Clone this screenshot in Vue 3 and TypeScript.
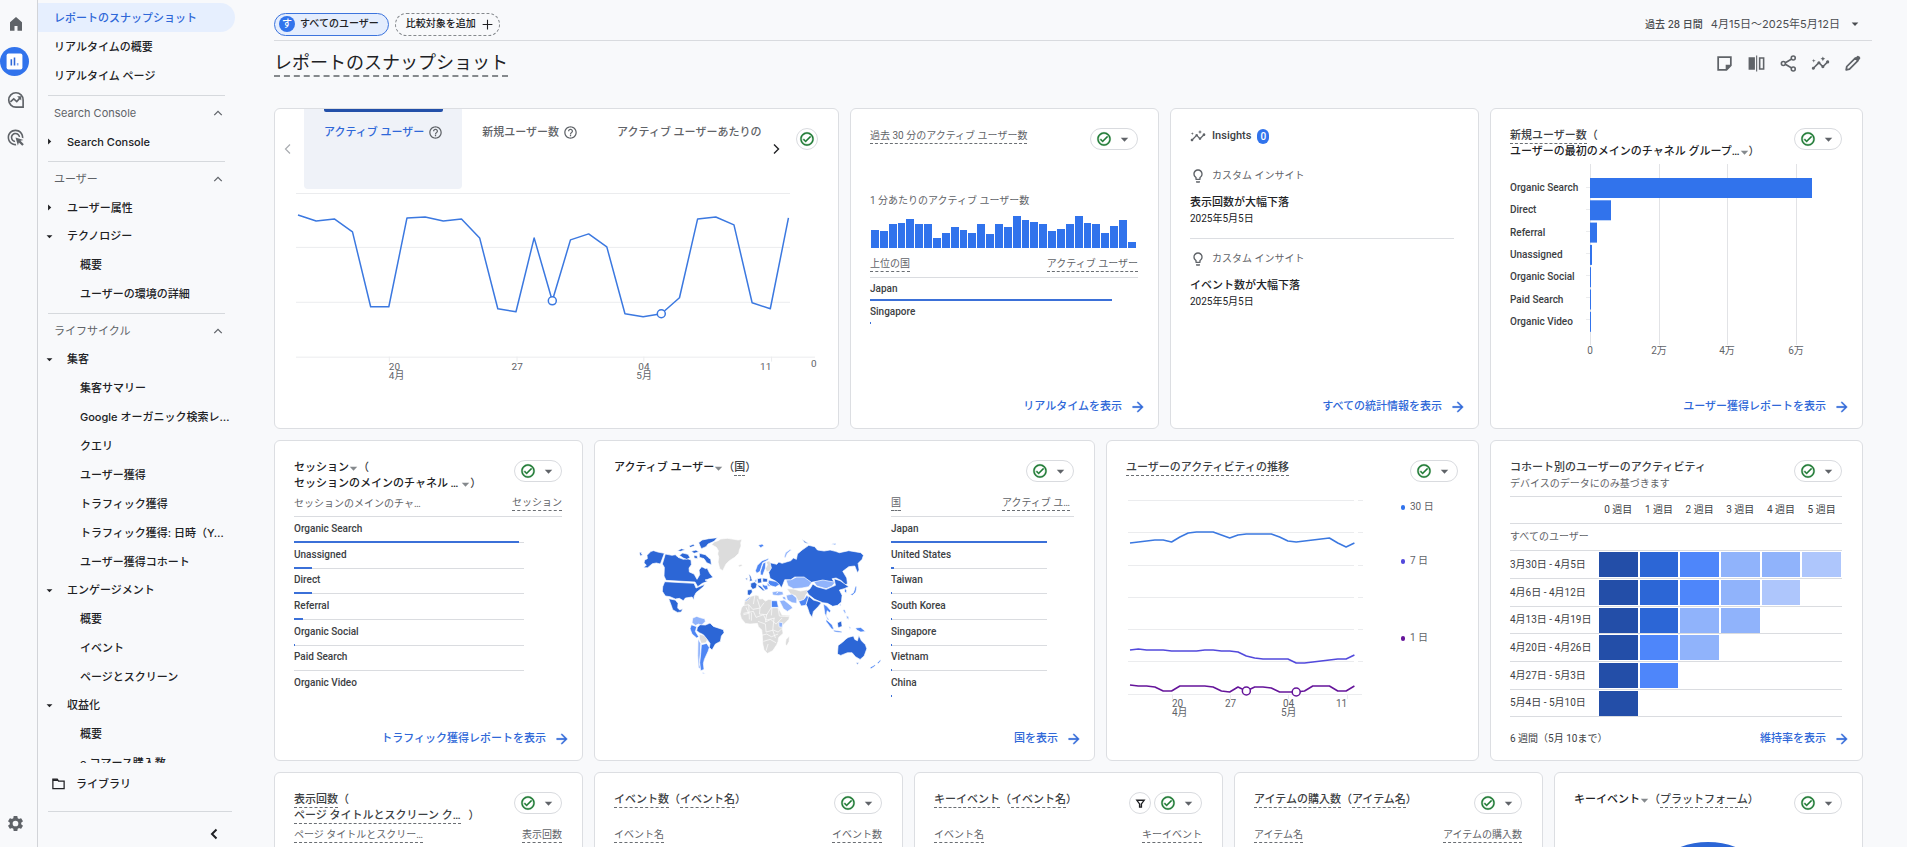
<script setup lang="ts">
import { h } from 'vue'

interface NavRow { label: string; level: 0 | 1 | 2; state?: 'open' | 'closed'; active?: boolean }
interface NavSection { title?: string; rows: NavRow[] }
interface BarRow { label: string; share: number }

const ICONS: Record<string, string> = {
  home: '<path d="M4 21V9.500l8-7 8 7V21h-6v-6.500h-4V21z"/>',
  bars: '<rect x="2" y="2" width="20" height="20" rx="2.500" fill="#fff"/><path d="M7 9h2v8H7zM11 7h2v10h-2z" fill="#2f68d8"/><path d="M15 14h2v3h-2z" fill="#7fa8f4"/>',
  explore: '<path fill="none" stroke="currentColor" stroke-width="2.200" d="M12 21.500A9.600 9.600 0 1 1 21.500 12v9.500z"/><path fill="none" stroke="currentColor" stroke-width="2.200" d="M4.500 14.500l4.500-4 4 3.500 5-5.500"/><path d="M13.500 7H19v5.500z"/>',
  ads: '<path d="M11.71 17.990C8.530 17.840 6 15.220 6 12c0-3.310 2.690-6 6-6 3.220 0 5.840 2.530 5.990 5.710l-2.100-.63C15.480 9.310 13.890 8 12 8c-2.210 0-4 1.790-4 4 0 1.890 1.310 3.480 3.080 3.890l.63 2.100zM22 12c0 .3-.01.6-.04.9l-1.970-.59c.01-.1.01-.21.01-.31 0-4.420-3.580-8-8-8s-8 3.580-8 8 3.580 8 8 8c.1 0 .21 0 .31-.01l.59 1.970c-.3.03-.6.04-.9.04C6.480 22 2 17.520 2 12S6.480 2 12 2s10 4.480 10 10zm-3.770 4.260L22 15l-10-3 3 10 1.260-3.770 4.270 4.270 1.980-1.980-4.280-4.260z"/>',
  gear: '<path d="M19.140 12.940c.04-.3.06-.61.06-.94s-.02-.64-.07-.94l2.030-1.580a.49.49 0 0 0 .12-.61l-1.920-3.320a.49.49 0 0 0-.59-.22l-2.390.96c-.5-.38-1.030-.7-1.620-.94l-.36-2.540a.48.48 0 0 0-.48-.41h-3.840c-.24 0-.43.17-.47.41l-.36 2.540c-.59.24-1.130.57-1.620.94l-2.390-.96a.48.48 0 0 0-.59.22L2.740 8.870c-.12.21-.08.47.12.61l2.030 1.580c-.05.3-.09.63-.09.94s.02.64.07.94l-2.030 1.580a.49.49 0 0 0-.12.61l1.920 3.320c.12.22.37.29.59.22l2.390-.96c.5.38 1.030.7 1.620.94l.36 2.540c.05.24.24.41.48.41h3.840c.24 0 .44-.17.47-.41l.36-2.540c.59-.24 1.130-.56 1.620-.94l2.390.96c.22.08.47 0 .59-.22l1.920-3.320a.48.48 0 0 0-.12-.61l-2.010-1.580zM12 15.600A3.600 3.600 0 1 1 12 8.400a3.600 3.600 0 0 1 0 7.200z"/>',
  check: '<path d="M12 2C6.480 2 2 6.480 2 12s4.480 10 10 10 10-4.480 10-10S17.520 2 12 2zm0 18c-4.410 0-8-3.590-8-8s3.590-8 8-8 8 3.590 8 8-3.590 8-8 8zm4.590-12.420L10 14.170l-2.590-2.580L6 13l4 4 8-8z" stroke="currentColor" stroke-width=".5"/>',
  caret: '<path d="M2 7.500h20L12 18z"/>',
  caretRight: '<path d="M7 2l11 10L7 22z"/>',
  help: '<path d="M11 18h2v-2h-2v2zm1-16C6.480 2 2 6.480 2 12s4.480 10 10 10 10-4.480 10-10S17.520 2 12 2zm0 18c-4.410 0-8-3.590-8-8s3.590-8 8-8 8 3.590 8 8-3.590 8-8 8zm0-14c-2.210 0-4 1.790-4 4h2c0-1.100.9-2 2-2s2 .9 2 2c0 2-3 1.750-3 5h2c0-2.250 3-2.500 3-5 0-2.210-1.790-4-4-4z"/>',
  insights: '<path d="M21 8c-1.450 0-2.260 1.440-1.930 2.510l-3.550 3.560c-.3-.09-.74-.09-1.040 0l-2.550-2.550C12.270 10.450 11.460 9 10 9c-1.450 0-2.270 1.440-1.930 2.520l-4.560 4.550C2.440 15.740 1 16.550 1 18c0 1.100.9 2 2 2 1.450 0 2.260-1.440 1.930-2.510l4.550-4.560c.3.09.74.09 1.040 0l2.550 2.550C12.730 16.550 13.540 18 15 18c1.450 0 2.270-1.440 1.930-2.520l3.560-3.550C21.560 12.260 23 11.450 23 10c0-1.100-.9-2-2-2zM15 9l.94-2.070L18 6l-2.060-.93L15 3l-.92 2.070L12 6l2.080.93zM3.500 11L4 9l2-.5L4 8l-.5-2L3 8l-2 .5L3 9z"/>',
  note: '<path fill="none" stroke="currentColor" stroke-width="2.200" d="M4 4h16v10.500L14.500 20H4z"/><path d="M20.500 13.500h-7v7z"/>',
  compare: '<path d="M2 4h8v16H2zM11.500 2h1.400v20h-1.400z"/><path fill="none" stroke="currentColor" stroke-width="2" d="M16 5h5v14h-5z"/>',
  share: '<g fill="none" stroke="currentColor" stroke-width="2"><circle cx="18" cy="5" r="2.500"/><circle cx="5.500" cy="12" r="2.500"/><circle cx="18" cy="19" r="2.500"/><path d="M8 11l8-4.700M8 13l8 4.700"/></g>',
  edit: '<path fill="none" stroke="currentColor" stroke-width="2.200" stroke-linejoin="round" d="M4 20l.8-4.200L15.500 5.100l3.400 3.400L8.200 19.200z"/><path d="M14.800 5.700l3.200-3.200q1-.7 2 .2l1.500 1.500q.8 1 0 2l-3 3z"/>',
  bulb: '<path d="M9 21c0 .55.45 1 1 1h4c.55 0 1-.45 1-1v-1H9v1zm3-19C8.140 2 5 5.140 5 9c0 2.380 1.190 4.470 3 5.740V17c0 .55.45 1 1 1h6c.55 0 1-.45 1-1v-2.260c1.810-1.270 3-3.360 3-5.740 0-3.860-3.140-7-7-7zm2.850 11.100l-.85.6V16h-4v-2.300l-.85-.6A5 5 0 0 1 7 9c0-2.760 2.240-5 5-5s5 2.240 5 5c0 1.630-.8 3.160-2.150 4.100z"/>',
  arrow: '<path d="M12 4l-1.410 1.410L16.170 11H4v2h12.170l-5.580 5.590L12 20l8-8z" stroke="currentColor" stroke-width=".6"/>',
  up: '<path fill="none" stroke="currentColor" stroke-width="3" d="M3 17l9-9 9 9"/>',
  left: '<path fill="none" stroke="currentColor" stroke-width="2.400" d="M16 3l-9 9 9 9"/>',
  leftBold: '<path fill="none" stroke="currentColor" stroke-width="4" d="M17 3l-9 9 9 9"/>',
  right: '<path fill="none" stroke="currentColor" stroke-width="2.800" d="M8 3l9 9-9 9"/>',
  plus: '<path d="M11 3h2v8h8v2h-8v8h-2v-8H3v-2h8z"/>',
  folder: '<path fill="none" stroke="currentColor" stroke-width="2" d="M3 5h7l2 3h9v12H3z"/><path d="M3 5h7l2 3H3z"/>',
  funnel: '<path fill="none" stroke="currentColor" stroke-width="3" d="M4 5h16l-6 8v7h-4v-7z"/>',
}

const Icon = (p: { name: string; size: number }) =>
  h('svg', { viewBox: '0 0 24 24', width: p.size, height: p.size, fill: 'currentColor', 'aria-hidden': 'true', innerHTML: ICONS[p.name] })
Icon.props = ['name', 'size']

const nav: NavSection[] = [
  { rows: [
    { label: 'レポートのスナップショット', level: 0, active: true },
    { label: 'リアルタイムの概要', level: 0 },
    { label: 'リアルタイム ページ', level: 0 },
  ] },
  { title: 'Search Console', rows: [{ label: 'Search Console', level: 1, state: 'closed' }] },
  { title: 'ユーザー', rows: [
    { label: 'ユーザー属性', level: 1, state: 'closed' },
    { label: 'テクノロジー', level: 1, state: 'open' },
    { label: '概要', level: 2 },
    { label: 'ユーザーの環境の詳細', level: 2 },
  ] },
  { title: 'ライフサイクル', rows: [
    { label: '集客', level: 1, state: 'open' },
    { label: '集客サマリー', level: 2 },
    { label: 'Google オーガニック検索レ…', level: 2 },
    { label: 'クエリ', level: 2 },
    { label: 'ユーザー獲得', level: 2 },
    { label: 'トラフィック獲得', level: 2 },
    { label: 'トラフィック獲得: 日時（Y…', level: 2 },
    { label: 'ユーザー獲得コホート', level: 2 },
    { label: 'エンゲージメント', level: 1, state: 'open' },
    { label: '概要', level: 2 },
    { label: 'イベント', level: 2 },
    { label: 'ページとスクリーン', level: 2 },
    { label: '収益化', level: 1, state: 'open' },
    { label: '概要', level: 2 },
    { label: 'e コマース購入数', level: 2 },
  ] },
]

const tools = [
  { icon: 'note', label: 'メモ' },
  { icon: 'compare', label: '比較' },
  { icon: 'share', label: '共有' },
  { icon: 'insights', label: 'インサイト' },
  { icon: 'edit', label: '編集' },
]

const line = (values: number[], x0: number, step: number) =>
  values.map((v, i) => `${(x0 + i * step).toFixed(1)},${v}`).join(' ')

const activeUsers = [35, 41, 39, 52, 127, 127, 38, 37, 41, 39, 58, 129, 132, 58, 121, 60, 54, 67, 134, 137, 134, 118, 39, 37, 45, 123, 129, 38]
const activeX = (i: number) => 4 + i * 18.2

const perMinute = [18, 17, 24, 25, 29, 24, 24, 10, 15, 21, 18, 15, 24, 14, 24, 21, 32, 28, 26, 24, 17, 19, 24, 32, 25, 24, 15, 22, 28, 6]

const insights = ['表示回数が大幅下落', 'イベント数が大幅下落']

const channels = [
  { label: 'Organic Search', width: 222 },
  { label: 'Direct', width: 21 },
  { label: 'Referral', width: 7 },
  { label: 'Unassigned', width: 2 },
  { label: 'Organic Social', width: 1 },
  { label: 'Paid Search', width: 1 },
  { label: 'Organic Video', width: 1 },
]

const sessions: BarRow[] = [
  { label: 'Organic Search', share: 98 }, { label: 'Unassigned', share: 8 }, { label: 'Direct', share: 8 },
  { label: 'Referral', share: 4 }, { label: 'Organic Social', share: 0.5 }, { label: 'Paid Search', share: 0 }, { label: 'Organic Video', share: 0 },
]
const countries: BarRow[] = [
  { label: 'Japan', share: 100 }, { label: 'United States', share: 2 }, { label: 'Taiwan', share: 0.7 },
  { label: 'South Korea', share: 0.7 }, { label: 'Singapore', share: 0.7 }, { label: 'Vietnam', share: 0.7 }, { label: 'China', share: 0.7 },
]

const days30 = [53, 52, 51, 50, 50, 52, 47, 43, 42, 42, 42, 45, 48, 45, 44, 44, 44, 44, 47, 51, 52, 51, 50, 49, 48, 53, 57, 53]
const days7 = [161, 160, 161, 161, 161, 162, 162, 162, 162, 161, 161, 162, 162, 163, 167, 169, 170, 170, 170, 170, 174, 174, 173, 172, 171, 170, 170, 166]
const days1 = [195, 196, 196, 197, 201, 201, 196, 196, 196, 196, 197, 201, 202, 197, 201, 197, 197, 198, 202, 202, 202, 201, 196, 196, 196, 201, 201, 196]

const cohorts = [
  { label: '3月30日 - 4月5日', cells: [5, 4, 3, 2, 2, 1] },
  { label: '4月6日 - 4月12日', cells: [5, 4, 3, 2, 1] },
  { label: '4月13日 - 4月19日', cells: [5, 4, 2, 2] },
  { label: '4月20日 - 4月26日', cells: [5, 3, 2] },
  { label: '4月27日 - 5月3日', cells: [5, 3] },
  { label: '5月4日 - 5月10日', cells: [5] },
]
</script>

<template>
  <div class="app" lang="ja">
    <nav class="rail" aria-label="メイン">
      <a href="#" aria-label="ホーム"><Icon name="home" :size="18" /></a>
      <a href="#" class="current" aria-label="レポート"><Icon name="bars" :size="19" /></a>
      <a href="#" aria-label="探索"><Icon name="explore" :size="18" /></a>
      <a href="#" aria-label="広告"><Icon name="ads" :size="19" /></a>
      <a href="#" class="admin" aria-label="管理"><Icon name="gear" :size="19" /></a>
    </nav>

    <aside class="side">
      <div class="side-scroll">
        <section v-for="(s, i) in nav" :key="i" class="group">
          <button v-if="s.title" class="group-head" type="button">{{ s.title }}<Icon name="up" :size="10" /></button>
          <a v-for="(r, j) in s.rows" :key="j" href="#" class="row" :class="['lv' + r.level, r.state, { active: r.active }]">
            <span v-if="r.state" class="twist"><Icon :name="r.state === 'open' ? 'caret' : 'caretRight'" :size="7" /></span>{{ r.label }}
          </a>
        </section>
      </div>
      <a href="#" class="library"><Icon name="folder" :size="15" />ライブラリ</a>
      <div class="fold"><button type="button" aria-label="折りたたむ"><Icon name="leftBold" :size="12" /></button></div>
    </aside>

    <main class="main">
      <header class="topbar">
        <button class="chip on" type="button"><span class="avatar">す</span>すべてのユーザー</button>
        <button class="chip add" type="button">比較対象を追加<Icon name="plus" :size="13" /></button>
        <button class="date" type="button"><small>過去 28 日間</small><span>4月15日～2025年5月12日</span><Icon name="caret" :size="8" /></button>
      </header>
      <div class="heading">
        <h1>レポートのスナップショット</h1>
        <div class="tools">
          <button v-for="t in tools" :key="t.icon" type="button" :aria-label="t.label"><Icon :name="t.icon" :size="19" /></button>
        </div>
      </div>

      <div class="grid">
        <section class="card w9 trend">
          <div class="tabs">
            <button class="nudge off" type="button" aria-label="前へ"><Icon name="left" :size="12" /></button>
            <div class="tab-list" role="tablist">
              <button class="tab on" role="tab" type="button" aria-selected="true">アクティブ ユーザー<Icon name="help" :size="15" /></button>
              <button class="tab" role="tab" type="button">新規ユーザー数<Icon name="help" :size="15" /></button>
              <button class="tab" role="tab" type="button">アクティブ ユーザーあたりの</button>
            </div>
            <button class="nudge" type="button" aria-label="次へ"><Icon name="right" :size="12" /></button>
            <button class="round" type="button" aria-label="データ品質"><Icon name="check" :size="16" /></button>
          </div>
          <svg class="chart trend-chart" viewBox="0 0 525 220" role="img" aria-label="アクティブ ユーザーの推移">
            <path class="gl" d="M2 4.500H497M2 58.500H497M2 113.500H497M2 168.500H522M95.500 168V173M223.500 168V173M350.500 168V173M478.500 168V173" />
            <polyline class="series" :points="line(activeUsers, 4, 18.2)" transform="translate(0 -9)" />
            <circle v-for="i in [14, 20]" :key="i" class="dot" :cx="activeX(i)" :cy="activeUsers[i] - 9" r="4" />
            <g class="tick"><text x="95" y="181">20</text><text x="95" y="190">4月</text><text x="218" y="181">27</text><text x="345" y="181">04</text><text x="343" y="190">5月</text><text x="467" y="181">11</text><text x="518" y="178">0</text></g>
          </svg>
        </section>

        <section class="card w5">
          <div class="head">
            <h2 class="small"><span class="dash">過去 30 分のアクティブ ユーザー数</span></h2>
            <button class="pill" type="button" aria-label="データ品質"><Icon name="check" :size="16" /><Icon name="caret" :size="9" /></button>
          </div>
          <p class="per-min">1 分あたりのアクティブ ユーザー数</p>
          <div class="spark"><i v-for="(v, i) in perMinute" :key="i" :style="{ height: v + 'px' }"></i></div>
          <table class="ranks live">
            <colgroup><col><col class="mid-col"><col class="end-col"></colgroup>
            <thead><tr><th><span class="dash">上位の国</span></th><th class="r" colspan="2"><span class="dash">アクティブ ユーザー</span></th></tr></thead>
            <tbody>
              <tr><td colspan="2">Japan<i :style="{ width: '99%' }"></i></td><td class="v"></td></tr>
              <tr><td colspan="2">Singapore<i :style="{ width: '1px' }"></i></td><td class="v"></td></tr>
            </tbody>
          </table>
          <a href="#" class="more">リアルタイムを表示<Icon name="arrow" :size="16" /></a>
        </section>

        <section class="card w5">
          <h2 class="ins-title"><Icon name="insights" :size="16" />Insights<b>0</b></h2>
          <article v-for="t in insights" :key="t" class="insight">
            <p class="kind"><Icon name="bulb" :size="16" />カスタム インサイト</p>
            <h3>{{ t }}</h3>
            <time datetime="2025-05-05">2025年5月5日</time>
          </article>
          <a href="#" class="more">すべての統計情報を表示<Icon name="arrow" :size="16" /></a>
        </section>

        <section class="card w6">
          <div class="head">
            <h2><span class="dash">新規ユーザー数</span>（<br><button class="pick" type="button">ユーザーの最初のメインのチャネル グループ…<Icon name="caret" :size="9" /></button>）</h2>
            <button class="pill" type="button" aria-label="データ品質"><Icon name="check" :size="16" /><Icon name="caret" :size="9" /></button>
          </div>
          <svg class="chart channels" viewBox="0 0 332 200" role="img" aria-label="チャネル別の新規ユーザー数">
            <path class="gl strong" d="M80.500 4V185M149.500 4V185M217.500 4V185M286.500 4V185" />
            <g v-for="(c, i) in channels" :key="c.label">
              <path class="gl" :d="`M76 ${27.5 + i * 22}H80`" />
              <rect x="80" :y="18 + i * 22.3" :width="c.width" height="20" class="bar" />
              <text x="0" :y="31 + i * 22.3" class="name">{{ c.label }}</text>
            </g>
            <g class="tick mid"><text x="80" y="194">0</text><text x="149" y="194">2万</text><text x="217" y="194">4万</text><text x="286" y="194">6万</text></g>
          </svg>
          <a href="#" class="more">ユーザー獲得レポートを表示<Icon name="arrow" :size="16" /></a>
        </section>

        <section class="card w5">
          <div class="head">
            <h2><button class="pick" type="button">セッション<Icon name="caret" :size="9" /></button>（<br><button class="pick" type="button">セッションのメインのチャネル … <Icon name="caret" :size="9" /></button>）</h2>
            <button class="pill" type="button" aria-label="データ品質"><Icon name="check" :size="16" /><Icon name="caret" :size="9" /></button>
          </div>
          <table class="ranks">
            <colgroup><col><col class="mid-col"><col class="end-col"></colgroup>
            <thead><tr><th>セッションのメインのチャ…</th><th class="r" colspan="2"><span class="dash">セッション</span></th></tr></thead>
            <tbody>
              <tr v-for="r in sessions" :key="r.label"><td colspan="2">{{ r.label }}<i :style="{ width: r.share + '%' }"></i></td><td class="v"></td></tr>
            </tbody>
          </table>
          <a href="#" class="more">トラフィック獲得レポートを表示<Icon name="arrow" :size="16" /></a>
        </section>

        <section class="card w8">
          <div class="head">
            <h2><button class="pick" type="button">アクティブ ユーザー<Icon name="caret" :size="9" /></button>（<span class="dash">国</span>）</h2>
            <button class="pill" type="button" aria-label="データ品質"><Icon name="check" :size="16" /><Icon name="caret" :size="9" /></button>
          </div>
          <div class="geo">
            <svg class="map" viewBox="0 0 800 510" role="img" aria-label="国別アクティブ ユーザー">
              <g class="m0">
                <path d="M282 72l12-4 8-5 20-2 20 3 12 2 12-2-4 10 1 10-5 12-2 10-12 12-16 10-10 10-10 20-9-6-5-20 2-14-3-10 2-10-6-10-14-8zM354 142l10-3 3 4-9 4z" />
                <path d="M374 246l14-10 20-5 8 2 2 10 10-1 8 7 10-5 8 1v24h20l8 14 4 8 24 1-4 12-18 18-1 10 2 14-13 12-2 12-4 10-12 18-16 8-10-10-4-18-1-20-2-22-10-10-3-10-22 2-14-2-12-14-4-14 4-18 8-10z" />
                <path d="M498 364l10-10-1 16-7 14-4-6zM438 132l10-4 6 12v16l-14 6-4-10 6-12zM500 212l20 1 22 6 18-4 12 4-14 10-6 16-18 4-8-16-14-4zM238 348l14 4 10 12-4 10-14 2-6-14z" />
              </g>
              <path class="seam" d="M358 264l28-4 12 14 22-4 12-16M386 260l2 44M412 244l8 26-2 18 22 2 14-22M370 286l30-6 8 18 22-8 8 16 26-6M440 288l-4 24 16-8 16 14 18-18M414 310l22 8 2 24 22-6 14 6 14-12M424 352l16-4 14 8 20-8M430 370l20-6 18 10M444 378l-6 20M474 270l4 24 32 2M456 262l-2 30M462 300l-4 36 8 24M404 234l-4 24M378 268l8 18-16 4M394 284v24" />
              <g class="m1">
                <path d="M218 300l12-5 14 5 10 2 2 8-12 12-8-4-10 4-10-8zM234 362l8 14-1 30-3 32 7 18-10-8-2-36zM248 462l8 5-8 0z" />
                <path d="M456 222l16-3 16 2 2 9-16 3-16-2zM478 248l14-2 22 18 4 6-16 10-12-8zM498 232l18-4 14 12v16l-14-2-14-8zM476 312l12 2-2 14-9-2zM374 248l14-12 2 4-12 10zM486 236l9 0 4 10-9-2z" />
                <path d="M498 186l18-2 14-8h26l20 16-10 14-20 4-26 2-16-8zM580 190l32-6 34 8-10 12-18 8-28-8zM492 118l4-14 14-10 4 2-12 10-6 14zM440 194l8 4 4 8-10-2z" />
                <path d="M404 186l6-2 0 8-5 1zM658 262l4-6 1 8zM668 276l6-2 4 10-4 2zM678 292l8 4 0 8-6-3zM686 324l6 4-3 6zM470 226l4-6z" />
              </g>
              <g class="m2">
                <path d="M214 320l16 6-4 14 10 16-6 4-14-12-6-16zM244 380l16-4 8 12-4 12-11 24-3 12 2 18-10 4-3-24 3-28z" />
                <path d="M454 248h17l4 20h-21zM406 158l6-16 14-14 20-7-2 5-16 8-8 26-10 6zM421 160l8-24 8-4-1 18-8 22-7-2zM446 186l14 3 14 2 6 8-14 8-14-4-8-8zM536 250l16-6 8-12 6 6-9 24-14 2zM426 198l8 4 8 0 2 12-8 2-8-10z" />
                <path d="M610 258l10 6 12 14-3 6-8-6-2 16 8 12-4 0-9-20zM618 304l18 16 6 15-8-3-16-22zM640 336l26 4-2 4-22-3zM706 330l16-2 14 12-14 2-12-6zM414 82l12-4 6 5-10 6zM634 78l14-2-2 5zM674 210l6 8-2 8-5-6z" />
                <path d="M690 230l10-6 4-12 2-8 4 2-3 16-10 10zM750 448l14-8 2 3-14 10zM772 434l8-9 2 3-8 10z" />
              </g>
              <g class="m3">
                <path d="M74 126l8-4-1-10 12-12 8-2 12 4 20 4-12 32-12-3-12 2-14 12-12 0 8-8-7-6zM58 104l6-2 0 6 5 2-8 4z" />
                <path d="M136 108l20 4 10-2 8 8 16 6 12-2 11 4 1 14-7 10 1 12 14 6 9 16 8-14-2-14 8-10 12 6 4-2 8 16 10 12-16 6-8 2 8 4-16 6-14 10-8-14-87-5-6-13 1-26-6-10z" />
                <path d="M236 74l10-8 20-4 26-3-10 11-18 8-6 8-14 6-4-8zM178 112l10-7 16 4 6 10-10 5-10-4zM238 106l18 4 8 8 8 6 2 16-14-6-8-12-14-4zM172 98l12-6 12 3-14 5zM206 84l14-5 4 4-12 5zM214 100l14-4 8 6-14 4zM222 112l10 2 0 8-10-2z" />
                <path d="M134 191l88 5 6 14 26-11-4 7-12 10-10 8-6 12 0 10-6-9-20 3-6 8-12-7-12 2-16-7-14-2-9-14 1-14zM146 242l20 4 8 10-1 14 6 6 9-4-4 10-12 1-14-8-4-12z" />
                <path d="M232 328l8-8 16 1 14-6 10 10 30 10 2 9-8 10-3 16-15 8-10 18-8-8 2-12-10-14-10-12-12-6-8-6z" />
                <path d="M382 216l13-2 2 8-8 10-7-2zM392 196l11-4 8 6-3 12-10 4-6-8zM386 168l6 6 5 14-9 2 2-8zM376 182l6-3-1 8zM412 182l12-2 1 14-12 2zM428 180l14 2 0 10-14 0zM412 200l10 4 13 14-6 0-14-12z" />
                <path d="M454 150l-4-16 20 5 6-7 10 4 26-8 8-8 9 4 3-16 14-12 20-14 18 4 8 10 20 3 18-3 16 4 12 4 28-6 36 6 8 8-4 12-12 12 3 20-5 8-8-20-18 2-18 14 12 20 2 18-8 2-10-12-16-8-12 2 6 10-34-6-34 7-22-16-28 0-12 8-18 0-6 16-4 8-8-12-10-8-16-8-4-18z" />
                <path d="M570 212l8-14 12 8 28 8 28-12-4-20 18 6 26 18-14 6-14 4 8 16-2 20-12 10-14 3-16-9-14-2-24-10-18-14-6-10zM558 260l8-26 14 12 14 4 10 4-10 12-14 14-4 18-8-12-6-18zM652 314l12-5 2 16-12 4zM546 64l12 8 10 6-14-4z" />
                <path d="M654 382l14-10 8-8 8-6 16-4 4 10 8 4 4-16 8 16 12 12 4 12-8 22-12 10-14-8-10-12-14 0-20 8-10-4zM708 434l8 0-4 5z" />
              </g>
            </svg>
            <table class="ranks narrow">
              <colgroup><col><col class="mid-col"><col class="end-col"></colgroup>
              <thead><tr><th><span class="dash">国</span></th><th class="r" colspan="2"><span class="dash">アクティブ ユ…</span></th></tr></thead>
              <tbody>
                <tr v-for="r in countries" :key="r.label"><td colspan="2">{{ r.label }}<i :style="{ width: r.share + '%' }"></i></td><td class="v"></td></tr>
              </tbody>
            </table>
          </div>
          <a href="#" class="more">国を表示<Icon name="arrow" :size="16" /></a>
        </section>

        <section class="card w6">
          <div class="head">
            <h2><span class="dash">ユーザーのアクティビティの推移</span></h2>
            <button class="pill" type="button" aria-label="データ品質"><Icon name="check" :size="16" /><Icon name="caret" :size="9" /></button>
          </div>
          <div class="activity">
            <svg class="chart" viewBox="0 0 240 240" role="img" aria-label="ユーザーのアクティビティの推移">
              <path class="gl" d="M2 10.500H228M2 42.500H228M2 75.500H228M2 107.500H228M2 139.500H228M2 171.500H228M2 204.500H236M46.500 204V209M104.500 204V209M162.500 204V209M221.500 204V209M232 10.500h5M232 42.500h5M232 75.500h5M232 107.500h5M232 139.500h5M232 171.500h5" />
              <polyline class="series" :points="line(days30, 4, 8.31)" />
              <polyline class="series week" :points="line(days7, 4, 8.31)" transform="translate(0 -1)" />
              <polyline class="series day" :points="line(days1, 4, 8.31)" />
              <circle v-for="i in [14, 20]" :key="i" class="dot day" :cx="4 + i * 8.31" :cy="days1[i]" r="4" />
              <g class="tick"><text x="46" y="217">20</text><text x="46" y="226">4月</text><text x="99" y="217">27</text><text x="157" y="217">04</text><text x="155" y="226">5月</text><text x="210" y="217">11</text></g>
            </svg>
            <ul class="legend"><li class="a">30 日</li><li class="b">7 日</li><li class="c">1 日</li></ul>
          </div>
        </section>

        <section class="card w6">
          <div class="head">
            <h2>コホート別のユーザーのアクティビティ<br><small>デバイスのデータにのみ基づきます</small></h2>
            <button class="pill" type="button" aria-label="データ品質"><Icon name="check" :size="16" /><Icon name="caret" :size="9" /></button>
          </div>
          <table class="cohort">
            <thead>
              <tr><th class="lead"></th><th v-for="n in 6" :key="n" scope="col">{{ n - 1 }} 週目</th></tr>
              <tr><th colspan="7" class="all">すべてのユーザー</th></tr>
            </thead>
            <tbody>
              <tr v-for="c in cohorts" :key="c.label">
                <th scope="row">{{ c.label }}</th>
                <td v-for="n in 6" :key="n"><i v-if="c.cells[n - 1]" :class="'heat' + c.cells[n - 1]"></i></td>
              </tr>
            </tbody>
          </table>
          <div class="foot"><span>6 週間（5月 10まで）</span><a href="#" class="more">維持率を表示<Icon name="arrow" :size="16" /></a></div>
        </section>

        <section class="card w5">
          <div class="head">
            <h2><span class="dash">表示回数</span>（<br><span class="dash gap">ページ タイトルとスクリーン ク…</span>）</h2>
            <button class="pill" type="button" aria-label="データ品質"><Icon name="check" :size="16" /><Icon name="caret" :size="9" /></button>
          </div>
          <table class="ranks"><thead><tr><th><span class="dash">ページ タイトルとスクリー…</span></th><th class="r"><span class="dash">表示回数</span></th></tr></thead></table>
        </section>

        <section class="card w5">
          <div class="head">
            <h2><span class="dash">イベント数</span>（<span class="dash">イベント名</span>）</h2>
            <button class="pill" type="button" aria-label="データ品質"><Icon name="check" :size="16" /><Icon name="caret" :size="9" /></button>
          </div>
          <table class="ranks"><thead><tr><th><span class="dash">イベント名</span></th><th class="r"><span class="dash">イベント数</span></th></tr></thead></table>
        </section>

        <section class="card w5">
          <div class="head">
            <h2><span class="dash">キーイベント</span>（<span class="dash">イベント名</span>）</h2>
            <button class="round filter" type="button" aria-label="フィルタ"><Icon name="funnel" :size="11" /></button>
            <button class="pill" type="button" aria-label="データ品質"><Icon name="check" :size="16" /><Icon name="caret" :size="9" /></button>
          </div>
          <table class="ranks"><thead><tr><th><span class="dash">イベント名</span></th><th class="r"><span class="dash">キーイベント</span></th></tr></thead></table>
        </section>

        <section class="card w5">
          <div class="head">
            <h2><span class="dash">アイテムの購入数</span>（<span class="dash">アイテム名</span>）</h2>
            <button class="pill" type="button" aria-label="データ品質"><Icon name="check" :size="16" /><Icon name="caret" :size="9" /></button>
          </div>
          <table class="ranks"><thead><tr><th><span class="dash">アイテム名</span></th><th class="r"><span class="dash">アイテムの購入数</span></th></tr></thead></table>
        </section>

        <section class="card w5">
          <div class="head">
            <h2><button class="pick" type="button">キーイベント<Icon name="caret" :size="9" /></button>（<span class="dash">プラットフォーム</span>）</h2>
            <button class="pill" type="button" aria-label="データ品質"><Icon name="check" :size="16" /><Icon name="caret" :size="9" /></button>
          </div>
          <svg class="donut" viewBox="0 0 148 148" width="148" height="148" role="img" aria-label="プラットフォーム別キーイベント">
            <circle cx="74" cy="74" r="58" fill="none" stroke="#2c66d6" stroke-width="32" />
          </svg>
        </section>
      </div>
    </main>
  </div>
</template>

<style>
body { margin: 0; background: #f8f9fb; overflow: hidden; }
</style>

<style scoped>
.app { display: flex; height: 100vh; overflow: hidden; background: #f8f9fb; color: #202124; font: 500 11px/16px Roboto, "Noto Sans CJK JP", sans-serif; }
.app * { box-sizing: border-box; }
button { font: inherit; color: inherit; background: none; border: 0; padding: 0; cursor: pointer; }
a { color: inherit; text-decoration: none; }
h1, h2, h3, p, ul { margin: 0; padding: 0; font-weight: 500; }
svg { flex: none; display: block; }

.rail { flex: 0 0 38px; display: flex; flex-direction: column; gap: 9px; padding: 9px 0 9px; border-right: 1px solid #d2d4d8; color: #5f6368; }
.rail a { width: 29px; height: 29px; margin-left: 1px; display: grid; place-items: center; border-radius: 50%; }
.rail .current { background: #3173ec; margin-left: 0; }
.rail .admin { margin-top: auto; }

.side { flex: 0 0 197px; display: flex; flex-direction: column; font-family: Inter, "Noto Sans CJK JP", sans-serif; }
.side-scroll { flex: 1; min-height: 0; overflow: hidden; padding-top: 3px; }
.group + .group::before { content: ""; display: block; height: 1px; margin: 5px 10px 3px; background: #d6d9dd; }
.group-head { width: 100%; height: 28px; padding: 0 12px 0 16px; display: flex; align-items: center; justify-content: space-between; color: #5f6368; font-weight: 400; }
.row { display: flex; align-items: center; height: 29px; white-space: nowrap; }
.row.open { height: 28px; }
.lv0 { padding-left: 16px; }
.lv1 { padding-left: 8px; }
.lv2 { padding-left: 42px; }
.twist { width: 21px; flex: none; }
.active { background: #e6effe; color: #2f68d8; border-radius: 0 15px 15px 0; }
.library { display: flex; align-items: center; gap: 10px; height: 48px; flex: none; margin-right: 3px; padding: 0 0 7px 13px; }
.fold { flex: none; height: 36px; margin: 0 3px 0 10px; padding: 8px 12px 0 0; border-top: 1px solid #d6d9dd; display: flex; align-items: center; justify-content: flex-end; }

.main { flex: 1; min-width: 0; padding: 0 44px 0 39px; }
.topbar { display: flex; align-items: center; gap: 6px; height: 41px; margin-right: -9px; padding: 8px 0 0; border-bottom: 1px solid #d9dbdf; font-size: 10px; }
.chip { display: flex; align-items: center; height: 23px; border-radius: 12px; border: 1px solid #3c74dd; background: #e4edfd; padding: 0 9px 0 4px; gap: 5px; }
.avatar { display: grid; place-items: center; width: 16px; height: 16px; border-radius: 50%; background: #3173ec; color: #fff; font-size: 10px; }
.add { background: none; border: 1px dashed #85898d; padding: 0 5px 0 10px; }
.date { margin-left: auto; display: flex; align-items: center; gap: 8px; padding-right: 13px; color: #4a4d51; font-family: Inter, "Noto Sans CJK JP", sans-serif; font-size: 11px; font-weight: 400; }
.date small { font-size: 10px; font-weight: 500; }
.date svg { margin-left: 3px; }

.heading { display: flex; justify-content: space-between; align-items: flex-start; height: 67px; padding-top: 10px; }
h1 { font-size: 18px; line-height: 24px; font-weight: 400; border-bottom: 2px dashed #85898d; }
.tools { display: flex; gap: 13px; padding-top: 3px; margin-right: 1px; color: #5f6368; }

.grid { display: grid; grid-template-columns: repeat(25, minmax(0, 1fr)); grid-auto-rows: minmax(321px, auto); gap: 11px; }
.card { display: flex; flex-direction: column; min-width: 0; background: #fff; border: 1px solid #dcdee2; border-radius: 6px; padding: 19px 20px 13px 19px; }
.w5 { grid-column: span 5; }
.w6 { grid-column: span 6; }
.w8 { grid-column: span 8; }
.w9 { grid-column: span 9; }
.head { display: flex; align-items: flex-start; height: 32px; flex: none; gap: 3px; }
.head h2 { flex: 1; min-width: 0; font-size: 11px; line-height: 16px; white-space: nowrap; color: #3c4043; }
.head h2.small { font-size: 10px; color: #5f6368; font-weight: 400; }
h2 small { font-size: 10px; font-weight: 400; color: #5f6368; }
.dash { display: inline-block; line-height: 15px; border-bottom: 1px dashed #6a6e73; vertical-align: top; }
.gap { margin-right: 8px; }
.pick { display: inline-flex; align-items: center; color: #202124; line-height: 16px; vertical-align: top; white-space: pre; }
.pick svg { color: #85898d; }
.pill { flex: none; display: flex; align-items: center; justify-content: space-between; width: 48px; height: 22px; border: 1px solid #d9dbdf; border-radius: 11px; padding: 0 8px 0 5px; background: #fff; color: #5f6368; }
.pill svg:first-child, .trend .round { color: #1e7a34; }
.round { flex: none; width: 22px; height: 22px; border: 1px solid #d9dbdf; border-radius: 50%; display: grid; place-items: center; background: #fff; }
.more { display: flex; align-items: center; justify-content: flex-end; gap: 8px; margin: auto -8px 0 auto; color: #2f68d8; white-space: nowrap; }

.trend { padding: 0 20px 0 19px; }
.tabs { display: flex; height: 80px; margin-left: -17px; }
.nudge { width: 22px; flex: none; display: grid; place-items: center; }
.off { color: #a9acb0; }
.tab-list { flex: 1; min-width: 0; overflow: hidden; display: flex; margin-left: 5px; }
.tab { flex: none; display: flex; align-items: flex-start; gap: 4px; padding: 16px 19px 0 20px; border-radius: 0 0 4px 4px; color: #5f6368; white-space: nowrap; position: relative; }
.tab.on { background: #eff2f8; color: #2f68d8; }
.tab.on::before { content: ""; position: absolute; left: 20px; right: 19px; top: 0; height: 3px; background: #2350a9; border-radius: 0 0 2px 2px; }
.tab svg { color: #5f6368; }
.trend .round { margin: 19px 0 0 9px; }

.chart { width: 100%; overflow: visible; }
.gl { fill: none; stroke: #ebecee; stroke-width: 1; }
.strong { stroke: #e2e3e6; }
.series { fill: none; stroke: #3b78e0; stroke-width: 1.5; stroke-linejoin: round; }
.week { stroke: #5249dc; }
.day { stroke: #65149a; }
.dot { fill: #fff; stroke: #3b78e0; stroke-width: 1.5; }
.dot.day { stroke: #65149a; }
.tick { font-size: 10px; font-weight: 400; fill: #5f6368; }
.mid { text-anchor: middle; }
.bar { fill: #3173ec; }
.name { font-size: 10px; fill: #3c4043; }

.per-min { margin-top: 33px; font-size: 10px; font-weight: 400; color: #5f6368; }
.spark { display: flex; align-items: flex-end; gap: 1px; height: 32px; margin: 7px 2px 0 1px; }
.spark i { flex: 1; background: #3173ec; }
.ranks { width: 100%; table-layout: fixed; border-collapse: separate; border-spacing: 0; }
.mid-col { width: 72px; }
.end-col { width: 38px; }
.ranks th, .ranks td { padding: 0; text-align: left; white-space: nowrap; }
.ranks th { height: 25px; padding-bottom: 5px; vertical-align: bottom; font-size: 10px; line-height: 15px; font-weight: 400; color: #5f6368; border-bottom: 1px solid #dadce0; }
.ranks th.r { text-align: right; }
.ranks td { position: relative; height: 26px; padding-bottom: 2px; font-size: 10px; color: #3c4043; border-bottom: 1px solid #dadce0; }
.ranks tr:nth-child(3n) td { height: 25px; }
.ranks tr:last-child td, .ranks .v, .live td { border-bottom-color: transparent; }
.ranks td i { position: absolute; left: 0; bottom: -1px; height: 2px; background: #3b70d8; }
.live { margin-top: 5px; }
.live .end-col { width: 24px; }
.live td { height: 23px; padding: 0; }

.ins-title { display: flex; align-items: center; gap: 6px; font-size: 11px; color: #3c4043; }
.ins-title svg, .kind svg { color: #5f6368; }
.ins-title b { background: #3173ec; color: #fff; font-weight: 500; font-size: 10px; line-height: 15px; width: 12px; border-radius: 6px; text-align: center; }
.insight { padding-top: 24px; margin-right: 4px; }
.insight + .insight { border-top: 1px solid #dcdee2; margin-top: 11px; padding-top: 12px; }
.kind { display: flex; align-items: center; gap: 6px; font-size: 10px; font-weight: 400; color: #5f6368; margin-bottom: 11px; }
.insight h3 { font-size: 11px; line-height: 16px; }
.insight time { display: block; font-size: 10px; font-weight: 400; line-height: 16px; }

.geo { display: flex; justify-content: space-between; align-items: flex-start; }
.map { width: 58%; margin: 26px 0 0 6px; }
.map path { stroke: #fff; stroke-width: 2; }
.m0 { fill: #dcdcdc; }
.m1 { fill: #90b3fb; }
.m2 { fill: #4e86f4; }
.m3 { fill: #2c66d6; }
.map .seam { fill: none; stroke: #fff; stroke-width: 2; }
.narrow { flex: none; width: 183px; }
.narrow .mid-col { width: 131px; }
.narrow .end-col { width: 27px; }
.narrow th.r { padding-right: 4px; }

.activity { display: flex; }
.activity .chart { width: 240px; margin-top: -2px; }
.legend { list-style: none; font-size: 10px; font-weight: 400; color: #5f6368; margin-left: 35px; padding-top: 7px; }
.legend li { display: flex; align-items: center; gap: 5px; height: 16px; }
.legend li::before { content: ""; width: 4px; height: 5px; border-radius: 2px; background: #3173ec; }
.legend .b { margin-top: 38px; }
.legend .c { margin-top: 61px; }
.legend .b::before { background: #5249dc; }
.legend .c::before { background: #65149a; }

.cohort { width: 100%; table-layout: fixed; border-collapse: separate; border-spacing: 0; border-top: 1px solid #dadce0; margin-top: 4px; }
.cohort th, .cohort td { padding: 0; height: 28px; border-bottom: 1px solid #dadce0; font-size: 10px; font-weight: 400; text-align: left; white-space: nowrap; color: #3c4043; }
.cohort thead th { height: 27px; text-align: center; }
.cohort thead .all { text-align: left; color: #5f6368; }
.cohort .lead { width: 88px; }
.cohort tbody tr:nth-child(3n) > * { height: 27px; }
.cohort td i { display: block; height: 25px; margin: 0 1px; }
.heat5 { background: #234ea8; }
.heat4 { background: #2c66d6; }
.heat3 { background: #4e86fa; }
.heat2 { background: #90b3fb; }
.heat1 { background: #aec6fc; }
.foot { display: flex; justify-content: space-between; align-items: center; margin-top: auto; font-size: 10px; font-weight: 400; color: #3c4043; }
.foot .more { margin-top: 0; font-size: 11px; font-weight: 500; }
.donut { margin: 18px auto 0; }
</style>
